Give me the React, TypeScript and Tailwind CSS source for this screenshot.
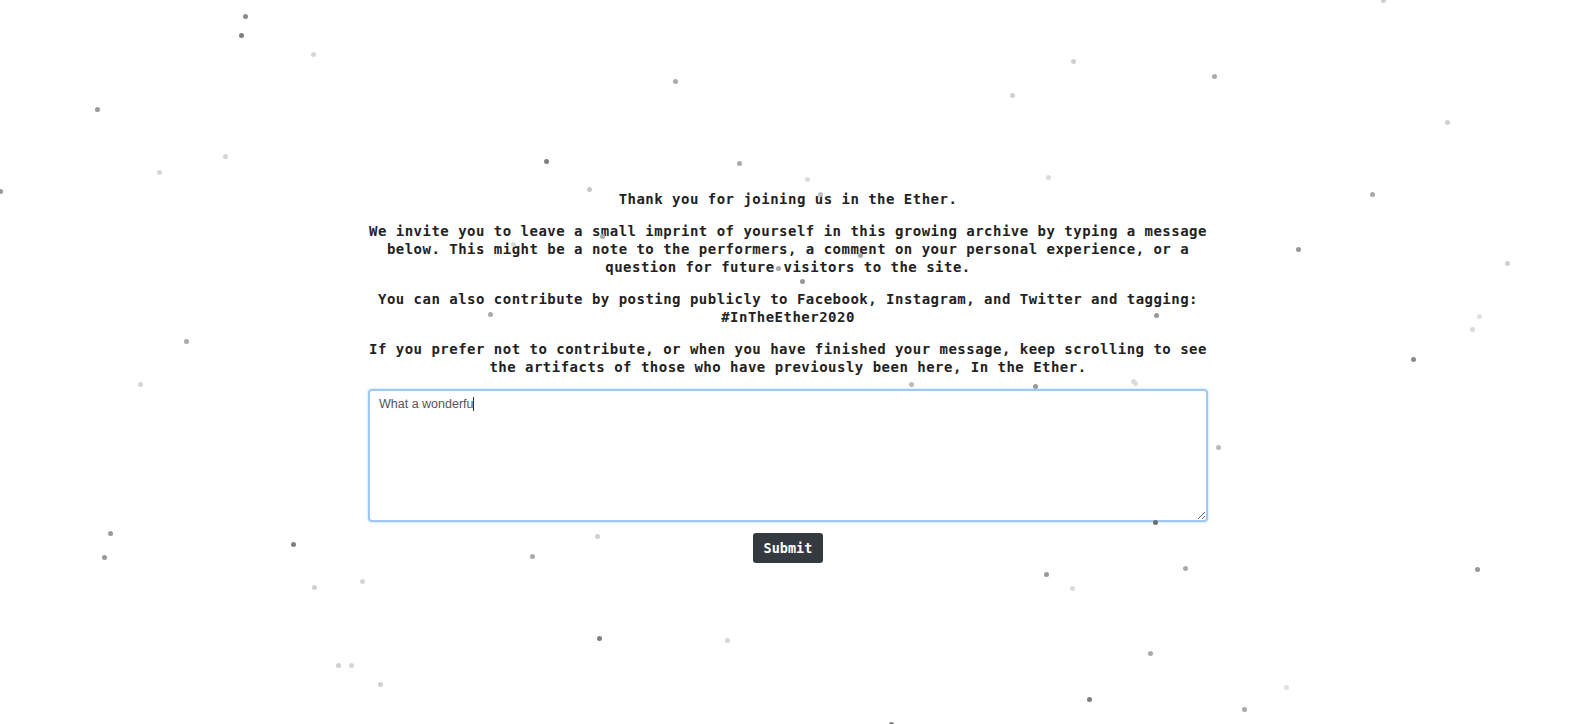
import React from "react";

const dots: [number, number, string][] = [
  [245, 16, "#8a8a8a"], [241, 35, "#7f7f7f"], [313, 54, "#d6d6d6"], [97, 109, "#999"],
  [674, 81, "#aaa"], [1071, 61, "#d0d0d0"], [1211, 76, "#aaa"], [1010, 95, "#d0d0d0"],
  [1380, 0, "#d0d0d0"], [1444, 122, "#d0d0d0"], [159, 172, "#d6d6d6"], [225, 156, "#d6d6d6"],
  [545, 161, "#7f7f7f"], [738, 163, "#aaa"], [588, 189, "#c8c8c8"], [1046, 177, "#dcdcdc"],
  [0, 191, "#999"], [1369, 194, "#aaa"], [818, 194, "#c0c0c0"], [805, 179, "#ddd"],
  [512, 244, "#dadada"], [601, 236, "#aaa"], [489, 314, "#aaa"], [777, 268, "#aaa"],
  [858, 255, "#aaa"], [800, 281, "#999"], [1154, 315, "#999"], [1295, 249, "#999"],
  [1504, 263, "#d0d0d0"], [1476, 316, "#e0e0e0"], [1469, 329, "#dadada"], [1410, 359, "#8a8a8a"],
  [186, 341, "#aaa"], [140, 383, "#d6d6d6"], [909, 383, "#bbb"], [1033, 385, "#999"],
  [1131, 380, "#dadada"], [1133, 382, "#dcdcdc"], [1215, 446, "#bbb"], [1153, 521, "#6f6f6f"],
  [110, 532, "#999"], [104, 556, "#999"], [293, 543, "#7f7f7f"], [531, 555, "#aaa"],
  [596, 535, "#d0d0d0"], [314, 586, "#d0d0d0"], [362, 580, "#d6d6d6"], [1044, 573, "#999"],
  [1070, 587, "#dcdcdc"], [1182, 567, "#aaa"], [1474, 568, "#999"], [598, 637, "#7f7f7f"],
  [726, 639, "#d6d6d6"], [338, 664, "#d0d0d0"], [351, 664, "#d6d6d6"], [380, 683, "#d0d0d0"],
  [1148, 652, "#aaa"], [1087, 698, "#7f7f7f"], [1283, 686, "#e0e0e0"], [1241, 708, "#aaa"],
  [889, 722, "#7f7f7f"],
];

const sx = 1572 / 1568;
const sy = 724 / 722;

export default function App() {
  return (
    <div className="relative w-full h-[724px] overflow-hidden bg-white">
      <div className="flex flex-col items-center pt-[190px] pl-[4px]">
        <div
          className="w-[840px] text-center text-[#222] font-bold text-[14px] leading-[18px] tracking-[0.485px]"
          style={{ fontFamily: '"DejaVu Sans Mono", "Liberation Mono", monospace' }}
        >
          <p>Thank you for joining us in the Ether.</p>
          <p className="mt-[14px]">
            We invite you to leave a small imprint of yourself in this growing archive by typing a message below. This might be a note to the performers, a comment on your personal experience, or a question for future visitors to the site.
          </p>
          <p className="mt-[14px]">
            You can also contribute by posting publicly to Facebook, Instagram, and Twitter and tagging: #InTheEther2020
          </p>
          <p className="mt-[14px]">
            If you prefer not to contribute, or when you have finished your message, keep scrolling to see the artifacts of those who have previously been here, In the Ether.
          </p>
        </div>
        <div className="relative mt-[13px]">
          <textarea
            defaultValue="What a wonderfu"
            className="block w-[840px] h-[133px] rounded-[4px] border-2 border-[#9cc8f2] shadow-[0_0_3px_#b7d8f7] outline-none px-[9px] py-[5px] text-[12.5px] text-[#555] leading-[16px] caret-transparent"
            style={{ fontFamily: '"Liberation Sans", Arial, sans-serif' }}
          />
          <span className="pointer-events-none absolute left-[105px] top-[8px] h-[14px] w-[1px] bg-[#333]" />
        </div>
        <button
          className="mt-[11px] w-[70px] h-[30px] rounded-[3px] bg-[#343a40] text-white font-bold text-[13.5px]"
          style={{ fontFamily: '"DejaVu Sans Mono", "Liberation Mono", monospace' }}
        >
          Submit
        </button>
      </div>
      <div className="pointer-events-none absolute inset-0">
        {dots.map(([x, y, c], i) => (
          <span
            key={i}
            className="absolute w-[5px] h-[5px] rounded-full"
            style={{ left: x * sx - 2.5, top: y * sy - 2.5, backgroundColor: c }}
          />
        ))}
      </div>
    </div>
  );
}
